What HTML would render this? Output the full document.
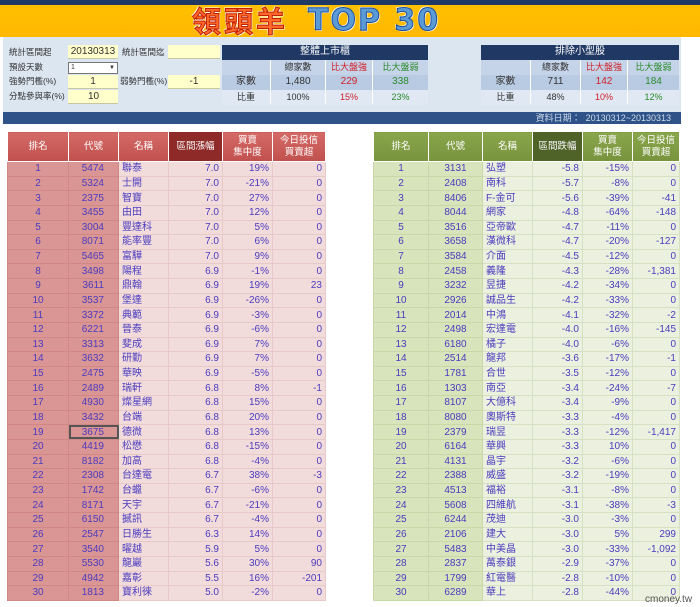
<!DOCTYPE html>
<html><head><meta charset="utf-8"><style>
*{margin:0;padding:0;box-sizing:border-box}
body{width:700px;height:607px;background:#fff;font-family:"Liberation Sans","Noto Sans CJK TC",sans-serif;position:relative;overflow:hidden;font-size:9px;color:#333}
.a{position:absolute}
#nav{left:0;top:0;width:700px;height:5px;background:#1f3864}
#ban{left:0;top:5px;width:700px;height:32px;background:linear-gradient(#ffc000,#ffb800)}
#t1{left:192px;top:4px;font-size:29px;font-weight:bold;color:#ff6a2a;font-family:"Noto Sans CJK TC",sans-serif;letter-spacing:3px;-webkit-text-stroke:1px #c02000;text-shadow:0 0 2px #fff,1px 1px 0 #fff,-1px -1px 0 #fff;line-height:32px}
#t2{left:308px;top:5px;font-size:30px;font-weight:900;color:#5b9bd5;font-family:"DejaVu Sans",sans-serif;-webkit-text-stroke:1px #1f4e9a;text-shadow:1px 1px 0 #fff,-1px -1px 0 #fff;line-height:32px;letter-spacing:2px}
#pan{left:3px;top:37px;width:678px;height:76px;background:#dce6f1}
#bar{left:3px;top:112px;width:678px;height:12px;background:#2f5388;color:#cdd9ea;font-size:9px;text-align:right;padding-right:10px;line-height:12px}
.lb{font-size:8.5px;color:#333;line-height:13px}
.yb{background:#ffffcc;border-bottom:1px solid #c8c8a0;text-align:center;font-size:10px;line-height:13px;height:14px}
.nv{background:#1f3864;color:#fff;text-align:center;font-size:10px;line-height:14px;height:15px}
.c{text-align:center;font-size:9px;line-height:14px;height:15px}
table{border-collapse:collapse;position:absolute;table-layout:fixed}
td,th{height:14.63px;font-size:10px;line-height:11px;padding:0 3px;border:1px solid #fff;color:#4b3bbf;white-space:nowrap;overflow:hidden;font-weight:normal}
th{height:30px;color:#fff;font-size:9.5px;line-height:12px;text-align:center}
.r{text-align:right}.m{text-align:center}
#L th{background:linear-gradient(#d46a66,#c0504d)}
#L th.k{background:#8e2b28}
#L td.d{background:#da9694;text-align:center}
#L td.d2{background:#da9694;text-align:right;padding-right:14px}
#L td{background:#f2dcdb;border-color:#e6c9c8}
#L td.d,#L td.d2{border-color:#d08785}
#R th{background:linear-gradient(#8aa64c,#77933c)}
#R th.k{background:#4f6228}
#R td{background:#ebf1de;border-color:#d6e0c4}
#R td.d,#R td.d2{background:#d7e4bc;border-color:#c8d8a8}
#R td.d{text-align:center}#R td.d2{text-align:center}
</style></head><body>
<div class="a" id="nav"></div>
<div class="a" id="ban"></div>
<div class="a" id="t1">領頭羊</div>
<div class="a" id="t2">TOP 30</div>
<div class="a" id="pan"></div>
<div class="a lb" style="left:9px;top:46px">統計區間起</div>
<div class="a yb" style="left:68px;top:45px;width:50px">20130313</div>
<div class="a lb" style="left:122px;top:46px">統計區間迄</div>
<div class="a yb" style="left:168px;top:45px;width:52px"></div>
<div class="a lb" style="left:9px;top:61px">預設天數</div>
<div class="a" style="left:68px;top:62px;width:50px;height:12px;background:#fff;border:1px solid #777;font-size:7px;line-height:10px;padding-left:2px">1<span style="position:absolute;right:2px;top:0;font-size:6px">▼</span></div>
<div class="a lb" style="left:9px;top:75px">強勢門檻(%)</div>
<div class="a yb" style="left:68px;top:75px;width:50px">1</div>
<div class="a lb" style="left:120px;top:75px">弱勢門檻(%)</div>
<div class="a yb" style="left:168px;top:75px;width:52px">-1</div>
<div class="a lb" style="left:9px;top:90px">分點參與率(%)</div>
<div class="a yb" style="left:68px;top:90px;width:50px;text-align:left;padding-left:20px">10</div>

<div class="a nv" style="left:222px;top:45px;width:206px">整體上市櫃</div>
<div class="a" style="left:222px;top:60px;width:206px;height:44px;background:#fff"></div>
<div class="a c" style="left:222px;top:60px;width:48px;background:#c5d4e8"></div>
<div class="a c" style="left:271px;top:60px;width:54px;background:#c5d4e8">總家數</div>
<div class="a c" style="left:326px;top:60px;width:46px;background:#c5d4e8;color:#d0202a">比大盤強</div>
<div class="a c" style="left:373px;top:60px;width:55px;background:#c5d4e8;color:#2a8a2a">比大盤弱</div>
<div class="a c" style="left:222px;top:75px;width:48px;background:#b9cbe3;font-size:10px">家數</div>
<div class="a c" style="left:271px;top:75px;width:54px;background:#b9cbe3;font-size:10px">1,480</div>
<div class="a c" style="left:326px;top:75px;width:46px;background:#b9cbe3;color:#d0202a;font-size:10px">229</div>
<div class="a c" style="left:373px;top:75px;width:55px;background:#b9cbe3;color:#2a8a2a;font-size:10px">338</div>
<div class="a c" style="left:222px;top:90px;width:48px;background:#dfe8f3">比重</div>
<div class="a c" style="left:271px;top:90px;width:54px;background:#dfe8f3">100%</div>
<div class="a c" style="left:326px;top:90px;width:46px;background:#dfe8f3;color:#d0202a">15%</div>
<div class="a c" style="left:373px;top:90px;width:55px;background:#dfe8f3;color:#2a8a2a">23%</div>

<div class="a nv" style="left:481px;top:45px;width:198px">排除小型股</div>
<div class="a" style="left:481px;top:60px;width:198px;height:44px;background:#fff"></div>
<div class="a c" style="left:481px;top:60px;width:49px;background:#c5d4e8"></div>
<div class="a c" style="left:531px;top:60px;width:49px;background:#c5d4e8">總家數</div>
<div class="a c" style="left:581px;top:60px;width:46px;background:#c5d4e8;color:#d0202a">比大盤強</div>
<div class="a c" style="left:628px;top:60px;width:51px;background:#c5d4e8;color:#2a8a2a">比大盤弱</div>
<div class="a c" style="left:481px;top:75px;width:49px;background:#b9cbe3;font-size:10px">家數</div>
<div class="a c" style="left:531px;top:75px;width:49px;background:#b9cbe3;font-size:10px">711</div>
<div class="a c" style="left:581px;top:75px;width:46px;background:#b9cbe3;color:#d0202a;font-size:10px">142</div>
<div class="a c" style="left:628px;top:75px;width:51px;background:#b9cbe3;color:#2a8a2a;font-size:10px">184</div>
<div class="a c" style="left:481px;top:90px;width:49px;background:#dfe8f3">比重</div>
<div class="a c" style="left:531px;top:90px;width:49px;background:#dfe8f3">48%</div>
<div class="a c" style="left:581px;top:90px;width:46px;background:#dfe8f3;color:#d0202a">10%</div>
<div class="a c" style="left:628px;top:90px;width:51px;background:#dfe8f3;color:#2a8a2a">12%</div>
<div class="a" id="bar">資料日期：&nbsp; 20130312~20130313</div>

<table id="L" style="left:7px;top:131px;width:318px">
<colgroup><col style="width:61px"><col style="width:50px"><col style="width:50px"><col style="width:54px"><col style="width:50px"><col style="width:53px"></colgroup>
<tr><th>排名</th><th>代號</th><th>名稱</th><th class="k">區間漲幅</th><th>買賣<br>集中度</th><th>今日投信<br>買賣超</th></tr>
<tr><td class="d">1</td><td class="d2">5474</td><td>聯泰</td><td class="r">7.0</td><td class="r">19%</td><td class="r">0</td></tr>
<tr><td class="d">2</td><td class="d2">5324</td><td>士開</td><td class="r">7.0</td><td class="r">-21%</td><td class="r">0</td></tr>
<tr><td class="d">3</td><td class="d2">2375</td><td>智寶</td><td class="r">7.0</td><td class="r">27%</td><td class="r">0</td></tr>
<tr><td class="d">4</td><td class="d2">3455</td><td>由田</td><td class="r">7.0</td><td class="r">12%</td><td class="r">0</td></tr>
<tr><td class="d">5</td><td class="d2">3004</td><td>豐達科</td><td class="r">7.0</td><td class="r">5%</td><td class="r">0</td></tr>
<tr><td class="d">6</td><td class="d2">8071</td><td>能率豐</td><td class="r">7.0</td><td class="r">6%</td><td class="r">0</td></tr>
<tr><td class="d">7</td><td class="d2">5465</td><td>富驊</td><td class="r">7.0</td><td class="r">9%</td><td class="r">0</td></tr>
<tr><td class="d">8</td><td class="d2">3498</td><td>陽程</td><td class="r">6.9</td><td class="r">-1%</td><td class="r">0</td></tr>
<tr><td class="d">9</td><td class="d2">3611</td><td>鼎翰</td><td class="r">6.9</td><td class="r">19%</td><td class="r">23</td></tr>
<tr><td class="d">10</td><td class="d2">3537</td><td>堡達</td><td class="r">6.9</td><td class="r">-26%</td><td class="r">0</td></tr>
<tr><td class="d">11</td><td class="d2">3372</td><td>典範</td><td class="r">6.9</td><td class="r">-3%</td><td class="r">0</td></tr>
<tr><td class="d">12</td><td class="d2">6221</td><td>晉泰</td><td class="r">6.9</td><td class="r">-6%</td><td class="r">0</td></tr>
<tr><td class="d">13</td><td class="d2">3313</td><td>斐成</td><td class="r">6.9</td><td class="r">7%</td><td class="r">0</td></tr>
<tr><td class="d">14</td><td class="d2">3632</td><td>研勤</td><td class="r">6.9</td><td class="r">7%</td><td class="r">0</td></tr>
<tr><td class="d">15</td><td class="d2">2475</td><td>華映</td><td class="r">6.9</td><td class="r">-5%</td><td class="r">0</td></tr>
<tr><td class="d">16</td><td class="d2">2489</td><td>瑞軒</td><td class="r">6.8</td><td class="r">8%</td><td class="r">-1</td></tr>
<tr><td class="d">17</td><td class="d2">4930</td><td>燦星網</td><td class="r">6.8</td><td class="r">15%</td><td class="r">0</td></tr>
<tr><td class="d">18</td><td class="d2">3432</td><td>台端</td><td class="r">6.8</td><td class="r">20%</td><td class="r">0</td></tr>
<tr><td class="d">19</td><td class="d2" style="outline:2px solid #555;outline-offset:-2px">3675</td><td>德微</td><td class="r">6.8</td><td class="r">13%</td><td class="r">0</td></tr>
<tr><td class="d">20</td><td class="d2">4419</td><td>松懋</td><td class="r">6.8</td><td class="r">-15%</td><td class="r">0</td></tr>
<tr><td class="d">21</td><td class="d2">8182</td><td>加高</td><td class="r">6.8</td><td class="r">-4%</td><td class="r">0</td></tr>
<tr><td class="d">22</td><td class="d2">2308</td><td>台達電</td><td class="r">6.7</td><td class="r">38%</td><td class="r">-3</td></tr>
<tr><td class="d">23</td><td class="d2">1742</td><td>台蠟</td><td class="r">6.7</td><td class="r">-6%</td><td class="r">0</td></tr>
<tr><td class="d">24</td><td class="d2">8171</td><td>天宇</td><td class="r">6.7</td><td class="r">-21%</td><td class="r">0</td></tr>
<tr><td class="d">25</td><td class="d2">6150</td><td>撼訊</td><td class="r">6.7</td><td class="r">-4%</td><td class="r">0</td></tr>
<tr><td class="d">26</td><td class="d2">2547</td><td>日勝生</td><td class="r">6.3</td><td class="r">14%</td><td class="r">0</td></tr>
<tr><td class="d">27</td><td class="d2">3540</td><td>曜越</td><td class="r">5.9</td><td class="r">5%</td><td class="r">0</td></tr>
<tr><td class="d">28</td><td class="d2">5530</td><td>龍巖</td><td class="r">5.6</td><td class="r">30%</td><td class="r">90</td></tr>
<tr><td class="d">29</td><td class="d2">4942</td><td>嘉彰</td><td class="r">5.5</td><td class="r">16%</td><td class="r">-201</td></tr>
<tr><td class="d">30</td><td class="d2">1813</td><td>寶利徠</td><td class="r">5.0</td><td class="r">-2%</td><td class="r">0</td></tr>
</table>

<table id="R" style="left:373px;top:131px;width:306px">
<colgroup><col style="width:55px"><col style="width:54px"><col style="width:50px"><col style="width:50px"><col style="width:50px"><col style="width:47px"></colgroup>
<tr><th>排名</th><th>代號</th><th>名稱</th><th class="k">區間跌幅</th><th>買賣<br>集中度</th><th>今日投信<br>買賣超</th></tr>
<tr><td class="d">1</td><td class="d2">3131</td><td>弘塑</td><td class="r">-5.8</td><td class="r">-15%</td><td class="r">0</td></tr>
<tr><td class="d">2</td><td class="d2">2408</td><td>南科</td><td class="r">-5.7</td><td class="r">-8%</td><td class="r">0</td></tr>
<tr><td class="d">3</td><td class="d2">8406</td><td>F-金可</td><td class="r">-5.6</td><td class="r">-39%</td><td class="r">-41</td></tr>
<tr><td class="d">4</td><td class="d2">8044</td><td>網家</td><td class="r">-4.8</td><td class="r">-64%</td><td class="r">-148</td></tr>
<tr><td class="d">5</td><td class="d2">3516</td><td>亞帝歐</td><td class="r">-4.7</td><td class="r">-11%</td><td class="r">0</td></tr>
<tr><td class="d">6</td><td class="d2">3658</td><td>漢微科</td><td class="r">-4.7</td><td class="r">-20%</td><td class="r">-127</td></tr>
<tr><td class="d">7</td><td class="d2">3584</td><td>介面</td><td class="r">-4.5</td><td class="r">-12%</td><td class="r">0</td></tr>
<tr><td class="d">8</td><td class="d2">2458</td><td>義隆</td><td class="r">-4.3</td><td class="r">-28%</td><td class="r">-1,381</td></tr>
<tr><td class="d">9</td><td class="d2">3232</td><td>昱捷</td><td class="r">-4.2</td><td class="r">-34%</td><td class="r">0</td></tr>
<tr><td class="d">10</td><td class="d2">2926</td><td>誠品生</td><td class="r">-4.2</td><td class="r">-33%</td><td class="r">0</td></tr>
<tr><td class="d">11</td><td class="d2">2014</td><td>中鴻</td><td class="r">-4.1</td><td class="r">-32%</td><td class="r">-2</td></tr>
<tr><td class="d">12</td><td class="d2">2498</td><td>宏達電</td><td class="r">-4.0</td><td class="r">-16%</td><td class="r">-145</td></tr>
<tr><td class="d">13</td><td class="d2">6180</td><td>橘子</td><td class="r">-4.0</td><td class="r">-6%</td><td class="r">0</td></tr>
<tr><td class="d">14</td><td class="d2">2514</td><td>龍邦</td><td class="r">-3.6</td><td class="r">-17%</td><td class="r">-1</td></tr>
<tr><td class="d">15</td><td class="d2">1781</td><td>合世</td><td class="r">-3.5</td><td class="r">-12%</td><td class="r">0</td></tr>
<tr><td class="d">16</td><td class="d2">1303</td><td>南亞</td><td class="r">-3.4</td><td class="r">-24%</td><td class="r">-7</td></tr>
<tr><td class="d">17</td><td class="d2">8107</td><td>大億科</td><td class="r">-3.4</td><td class="r">-9%</td><td class="r">0</td></tr>
<tr><td class="d">18</td><td class="d2">8080</td><td>奧斯特</td><td class="r">-3.3</td><td class="r">-4%</td><td class="r">0</td></tr>
<tr><td class="d">19</td><td class="d2">2379</td><td>瑞昱</td><td class="r">-3.3</td><td class="r">-12%</td><td class="r">-1,417</td></tr>
<tr><td class="d">20</td><td class="d2">6164</td><td>華興</td><td class="r">-3.3</td><td class="r">10%</td><td class="r">0</td></tr>
<tr><td class="d">21</td><td class="d2">4131</td><td>晶宇</td><td class="r">-3.2</td><td class="r">-6%</td><td class="r">0</td></tr>
<tr><td class="d">22</td><td class="d2">2388</td><td>威盛</td><td class="r">-3.2</td><td class="r">-19%</td><td class="r">0</td></tr>
<tr><td class="d">23</td><td class="d2">4513</td><td>福裕</td><td class="r">-3.1</td><td class="r">-8%</td><td class="r">0</td></tr>
<tr><td class="d">24</td><td class="d2">5608</td><td>四維航</td><td class="r">-3.1</td><td class="r">-38%</td><td class="r">-3</td></tr>
<tr><td class="d">25</td><td class="d2">6244</td><td>茂迪</td><td class="r">-3.0</td><td class="r">-3%</td><td class="r">0</td></tr>
<tr><td class="d">26</td><td class="d2">2106</td><td>建大</td><td class="r">-3.0</td><td class="r">5%</td><td class="r">299</td></tr>
<tr><td class="d">27</td><td class="d2">5483</td><td>中美晶</td><td class="r">-3.0</td><td class="r">-33%</td><td class="r">-1,092</td></tr>
<tr><td class="d">28</td><td class="d2">2837</td><td>萬泰銀</td><td class="r">-2.9</td><td class="r">-37%</td><td class="r">0</td></tr>
<tr><td class="d">29</td><td class="d2">1799</td><td>紅電醫</td><td class="r">-2.8</td><td class="r">-10%</td><td class="r">0</td></tr>
<tr><td class="d">30</td><td class="d2">6289</td><td>華上</td><td class="r">-2.8</td><td class="r">-44%</td><td class="r">0</td></tr>
</table>
<div class="a" style="left:645px;top:594px;font-size:10px;color:#555">cmoney.tw</div>
</body></html>
